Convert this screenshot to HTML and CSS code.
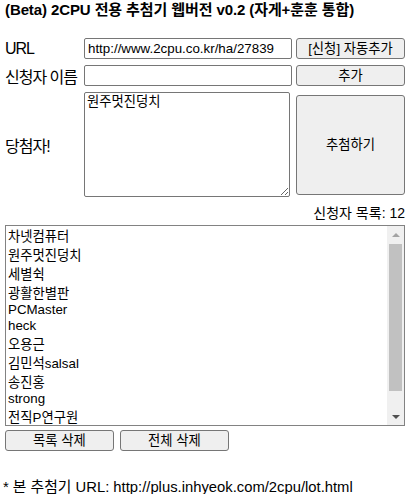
FILE: index.html
```html
<!DOCTYPE html>
<html lang="ko">
<head>
    <meta charset="UTF-8">
    <title>2CPU 추첨기</title>
    <link rel="stylesheet" href="styles.css">
</head>
<body>
    <h1 class="title">(Beta) 2CPU 전용 추첨기 웹버전 v0.2 (자게+훈훈 통합)</h1>

    <div class="form">
        <label class="label">URL</label>
        <input class="field" type="text" value="http://www.2cpu.co.kr/ha/27839">
        <button class="btn">[신청] 자동추가</button>

        <label class="label">신청자 이름</label>
        <input class="field" type="text">
        <button class="btn">추가</button>

        <label class="label">당첨자!</label>
        <textarea class="winner">원주멋진덩치</textarea>
        <button class="btn btn-draw">추첨하기</button>
    </div>

    <div class="count">신청자 목록: 12</div>

    <div class="list">
        <div class="items">
            <div class="item">차넷컴퓨터</div>
            <div class="item">원주멋진덩치</div>
            <div class="item">세별쉭</div>
            <div class="item">광활한별판</div>
            <div class="item">PCMaster</div>
            <div class="item">heck</div>
            <div class="item">오용근</div>
            <div class="item">김민석salsal</div>
            <div class="item">송진홍</div>
            <div class="item">strong</div>
            <div class="item">전직P연구원</div>
        </div>
        <div class="scrollbar">
            <span class="arrow arrow-up"></span>
            <span class="thumb"></span>
            <span class="arrow arrow-down"></span>
        </div>
    </div>

    <div class="actions">
        <button class="btn">목록 삭제</button>
        <button class="btn">전체 삭제</button>
    </div>

    <p class="footer">* 본 추첨기 URL: http://plus.inhyeok.com/2cpu/lot.html</p>
</body>
</html>
```

FILE: styles.css
```css
body {
    margin: 0;
    padding: 0 5px;
    font-family: "Liberation Sans", "Noto Sans CJK KR", sans-serif;
    color: #000;
    background: #fff;
}

.title {
    font-size: 15px;
    font-weight: bold;
    margin: 0;
    line-height: 20px;
    letter-spacing: -0.1px;
}

.form {
    display: grid;
    grid-template-columns: 75px 208px 109px;
    grid-template-rows: 21px 21px 105px;
    column-gap: 4px;
    row-gap: 6px;
    margin-top: 18px;
}

.label {
    align-self: center;
    font-size: 16px;
    letter-spacing: -1px;
    white-space: nowrap;
}

.field {
    box-sizing: border-box;
    width: 208px;
    height: 21px;
    margin: 0;
    padding: 1px 3px;
    border: 1px solid #767676;
    border-radius: 2px;
    font-family: "Liberation Sans", "Noto Sans CJK KR", sans-serif;
    font-size: 13.33px;
}

.winner {
    box-sizing: border-box;
    width: 206px;
    height: 105px;
    margin: 0;
    padding: 0 2px;
    border: 1px solid #767676;
    border-radius: 2px;
    font-family: "Noto Sans CJK KR", sans-serif;
    font-size: 13.33px;
    line-height: 15px;
    resize: both;
}

.btn {
    box-sizing: border-box;
    width: 109px;
    height: 21px;
    margin: 0;
    padding: 0;
    background: #efefef;
    border: 1px solid #767676;
    border-radius: 3px;
    font-family: "Liberation Sans", "Noto Sans CJK KR", sans-serif;
    font-size: 13.33px;
    line-height: 17px;
    color: #000;
}

.btn-draw {
    height: 100px;
    align-self: center;
}

.count {
    text-align: right;
    font-size: 14px;
    margin-top: 6px;
    line-height: 20px;
}

.list {
    box-sizing: border-box;
    display: flex;
    height: 201px;
    margin-top: 2px;
    border: 1px solid #828282;
    font-size: 13.33px;
}

.items {
    flex: 1;
    overflow: hidden;
}

.item {
    padding: 0 2px;
    min-height: 16px;
}

.scrollbar {
    display: flex;
    flex-direction: column;
    width: 17px;
    background: #f0f0f0;
}

.arrow {
    display: flex;
    align-items: center;
    justify-content: center;
    height: 17px;
}

.arrow::before {
    content: "";
    border-left: 4px solid transparent;
    border-right: 4px solid transparent;
}

.arrow-up::before {
    border-bottom: 4px solid #a3a3a3;
}

.arrow-down {
    margin-top: auto;
}

.arrow-down::before {
    border-top: 4px solid #505050;
}

.thumb {
    height: 147px;
    margin: 1px 2px 0;
    background: #c1c1c1;
}

.actions {
    display: flex;
    gap: 6px;
    margin-top: 4px;
}

.footer {
    margin: 24px 0 0 -2px;
    font-size: 14.8px;
}
```
